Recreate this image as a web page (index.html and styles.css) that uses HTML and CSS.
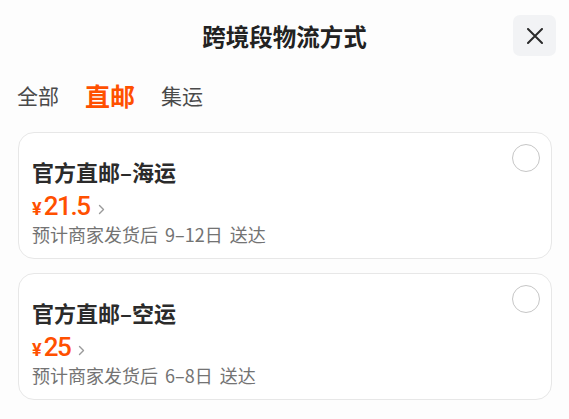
FILE: index.html
```html
<!DOCTYPE html>
<html lang="zh-CN">
<head>
<meta charset="utf-8">
<title>跨境段物流方式</title>
<link rel="stylesheet" href="styles.css">
</head>
<body>
<div class="sheet">
  <header class="header">
    <div class="spacer"></div>
    <h1 class="title">跨境段物流方式</h1>
    <button class="close" aria-label="关闭">
      <svg width="16" height="16" viewBox="0 0 16 16"><path d="M1 1 L15 15 M15 1 L1 15" stroke="#2b2b2b" stroke-width="2" stroke-linecap="round" fill="none"/></svg>
    </button>
  </header>
  <nav class="tabs">
    <span class="tab">全部</span>
    <span class="tab active">直邮</span>
    <span class="tab">集运</span>
  </nav>
  <div class="list">
    <div class="card">
      <div class="info">
        <div class="name">官方直邮–海运</div>
        <div class="price"><span class="yen">¥</span><span class="num">21.5</span><svg class="chev" width="7" height="11" viewBox="0 0 7 11"><path d="M1.5 1.5 L5.5 5.5 L1.5 9.5" stroke="#9a9a9a" stroke-width="1.4" fill="none" stroke-linecap="round" stroke-linejoin="round"/></svg></div>
        <div class="eta">预计商家发货后 9–12日 送达</div>
      </div>
      <span class="radio"></span>
    </div>
    <div class="card">
      <div class="info">
        <div class="name">官方直邮–空运</div>
        <div class="price"><span class="yen">¥</span><span class="num">25</span><svg class="chev" width="7" height="11" viewBox="0 0 7 11"><path d="M1.5 1.5 L5.5 5.5 L1.5 9.5" stroke="#9a9a9a" stroke-width="1.4" fill="none" stroke-linecap="round" stroke-linejoin="round"/></svg></div>
        <div class="eta">预计商家发货后 6–8日 送达</div>
      </div>
      <span class="radio"></span>
    </div>
  </div>
</div>
</body>
</html>
```
FILE: styles.css
```css
* { box-sizing: border-box; }
html, body { margin: 0; padding: 0; }
body {
  background: #fdfdfd;
  font-family: "Noto Sans CJK SC", "Noto Sans", sans-serif;
  color: #2a2a2a;
}
.sheet {
  width: 569px;
  height: 419px;
  overflow: hidden;
  padding: 14px 13px 0 18px;
}
.header {
  display: grid;
  grid-template-columns: 1fr auto 1fr;
  align-items: center;
  height: 41px;
  margin-left: -5px;
}
.title {
  margin: 0;
  font-size: 23.5px;
  font-weight: 700;
  line-height: 41px;
  color: #222;
  padding-top: 2px;
}
.close {
  justify-self: end;
  width: 43px;
  height: 41px;
  border: none;
  border-radius: 7px;
  background: #f2f3f5;
  display: flex;
  align-items: center;
  justify-content: center;
  padding: 0;
}
.tabs {
  display: flex;
  align-items: center;
  gap: 26px;
  height: 32px;
  margin-top: 24px;
  margin-left: -1px;
}
.tab {
  font-size: 21px;
  line-height: 32px;
  color: #4a4a4a;
}
.tab.active {
  font-size: 25px;
  font-weight: 700;
  color: #ff5000;
}
.list {
  display: flex;
  flex-direction: column;
  gap: 14px;
  margin-top: 21px;
  width: 534px;
}
.card {
  display: flex;
  justify-content: space-between;
  align-items: flex-start;
  height: 127px;
  background: #fff;
  border: 1.5px solid #e7e7e7;
  border-radius: 16px;
  padding: 24px 11px 0 13px;
}
.info {
  display: flex;
  flex-direction: column;
}
.name {
  font-size: 22px;
  font-weight: 700;
  line-height: 28px;
  color: #2b2b2b;
}
.price {
  display: flex;
  align-items: baseline;
  margin-top: 5px;
  height: 32px;
  line-height: 32px;
  color: #ff5000;
}
.yen {
  font-family: "Roboto", sans-serif;
  font-size: 18px;
  font-weight: 700;
  margin-right: 2px;
}
.num {
  font-family: "Roboto", sans-serif;
  font-size: 26px;
  font-weight: 500;
  letter-spacing: -1.4px;
}
.chev {
  margin-left: 8px;
  align-self: center;
  position: relative;
  top: 3px;
}
.eta {
  font-size: 18px;
  line-height: 24px;
  color: #737373;
  word-spacing: 3px;
}
.radio {
  width: 28px;
  height: 28px;
  border-radius: 50%;
  border: 1.5px solid #c6c6c6;
  margin-top: -13px;
  flex: none;
}
```
